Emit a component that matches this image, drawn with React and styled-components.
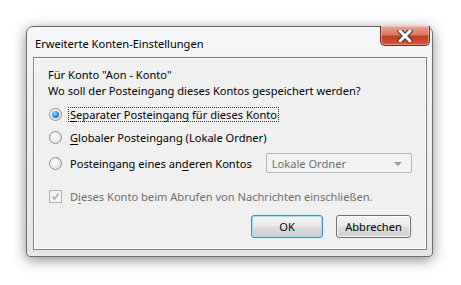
import styled, { createGlobalStyle } from "styled-components";

const GlobalStyle = createGlobalStyle`
  html, body {
    margin: 0;
    padding: 0;
    background: #ffffff;
  }
  body {
    font-family: "Noto Sans", "Open Sans", sans-serif;
    font-size: 11.1px;
    color: #000;
  }
`;

const Page = styled.div`
  width: 461px;
  height: 285px;
  padding: 26px 0 0 26px;
  box-sizing: border-box;
`;

const Window = styled.div`
  width: 407px;
  height: 231px;
  box-sizing: border-box;
  border: 1px solid #6b6b6b;
  border-radius: 7px 7px 4px 4px;
  background: linear-gradient(180deg, #f6f7f8 0%, #eef0f2 40%, #e4e6e8 100%);
  box-shadow: 0 3px 14px rgba(0, 0, 0, 0.45);
  display: flex;
  flex-direction: column;
  padding: 0 5px 6px 6px;
`;

const TitleBar = styled.div`
  height: 30px;
  display: flex;
  align-items: flex-start;
  justify-content: space-between;
`;

const Title = styled.div`
  padding: 9px 0 0 2px;
  color: #000;
`;

const CloseButton = styled.div`
  width: 50px;
  height: 20px;
  margin-top: -1px;
  margin-right: -3px;
  box-sizing: border-box;
  border: 1px solid #6d2a1e;
  border-top: none;
  border-radius: 0 0 5px 5px;
  background: linear-gradient(180deg, #e9a796 0%, #d9795f 45%, #c13d22 55%, #d2573c 100%);
  box-shadow: inset 0 0 0 1px rgba(255, 220, 210, 0.45);
  display: flex;
  align-items: center;
  justify-content: center;
`;

const Content = styled.div`
  flex: 1;
  border: 1px solid #7f8387;
  box-shadow: inset 0 0 0 1px #ffffff;
  background: #f0f0f0;
  padding: 9px 14px 0 14px;
  display: flex;
  flex-direction: column;
`;

const Line = styled.div`
  height: 16px;
  line-height: 16px;
  white-space: nowrap;
`;

const OptionRow = styled.div`
  display: flex;
  align-items: center;
  height: 16px;
  margin-top: ${(p) => p.$gap}px;
  white-space: nowrap;
  color: ${(p) => (p.$disabled ? "#6d6d6d" : "#000")};
`;

const RadioCircle = styled.span`
  width: 13px;
  height: 13px;
  box-sizing: border-box;
  border-radius: 50%;
  border: 1px solid #8f8f8f;
  background: radial-gradient(circle at 40% 40%, #ffffff 0%, #e4e4e4 70%, #d0d0d0 100%);
  margin: 0 6px 0 1px;
  display: flex;
  align-items: center;
  justify-content: center;
  flex-shrink: 0;
`;

const RadioDot = styled.span`
  width: 7px;
  height: 7px;
  border-radius: 50%;
  background: radial-gradient(circle at 40% 35%, #a9dcf8 0%, #2f8fd8 50%, #124c8a 100%);
`;

const Label = styled.span`
  padding: 0 1px;
  border: 1px dotted ${(p) => (p.$focused ? "#333" : "transparent")};
  line-height: 13px;
`;

const U = styled.span`
  text-decoration: underline;
  text-underline-offset: 2px;
`;

const Select = styled.div`
  margin-left: 12px;
  width: 150px;
  height: 20px;
  box-sizing: border-box;
  border: 1px solid #b5b5b5;
  border-radius: 2px;
  background: #f2f2f2;
  color: #6d6d6d;
  display: flex;
  align-items: center;
  justify-content: space-between;
  padding: 0 9px 0 5px;
`;

const Arrow = styled.span`
  width: 0;
  height: 0;
  border-left: 4px solid transparent;
  border-right: 4px solid transparent;
  border-top: 4px solid #9a9a9a;
  margin-top: 2px;
`;

const CheckBox = styled.span`
  width: 13px;
  height: 13px;
  box-sizing: border-box;
  border: 1px solid #b1b1b1;
  background: #f4f4f4;
  margin: 0 6px 0 1px;
  display: flex;
  align-items: center;
  justify-content: center;
  flex-shrink: 0;
`;

const ButtonRow = styled.div`
  display: flex;
  justify-content: flex-end;
  gap: 13px;
  margin-top: 11px;
  padding-right: 1px;
`;

const Button = styled.div`
  width: ${(p) => p.$w}px;
  height: 23px;
  box-sizing: border-box;
  border: 1px solid ${(p) => (p.$default ? "#3c8bc6" : "#707070")};
  border-radius: 3px;
  background: linear-gradient(180deg, #f3f3f3 0%, #ebebeb 48%, #dddddd 52%, #cfcfcf 100%);
  box-shadow: inset 0 0 0 1px ${(p) => (p.$default ? "#a8dcf5" : "#fbfbfb")};
  display: flex;
  align-items: center;
  justify-content: center;
`;

export default function App() {
  return (
    <Page>
      <GlobalStyle />
      <Window>
        <TitleBar>
          <Title>Erweiterte Konten-Einstellungen</Title>
          <CloseButton>
            <svg width="16" height="12" viewBox="0 0 16 12">
              <path d="M3 1 L13 11 M13 1 L3 11" stroke="#3a3a3a" strokeWidth="5" strokeLinecap="round" />
              <path d="M3 1 L13 11 M13 1 L3 11" stroke="#ffffff" strokeWidth="3" strokeLinecap="round" />
            </svg>
          </CloseButton>
        </TitleBar>
        <Content>
          <Line>Für Konto "Aon - Konto"</Line>
          <Line>Wo soll der Posteingang dieses Kontos gespeichert werden?</Line>
          <OptionRow $gap={7}>
            <RadioCircle><RadioDot /></RadioCircle>
            <Label $focused><U>S</U>eparater Posteingang für dieses Konto</Label>
          </OptionRow>
          <OptionRow $gap={7}>
            <RadioCircle />
            <Label><U>G</U>lobaler Posteingang (Lokale Ordner)</Label>
          </OptionRow>
          <OptionRow $gap={10}>
            <RadioCircle />
            <Label>Posteingang eines an<U>d</U>eren Kontos</Label>
            <Select>
              <span>Lokale Ordner</span>
              <Arrow />
            </Select>
          </OptionRow>
          <OptionRow $gap={17} $disabled>
            <CheckBox>
              <svg width="9" height="9" viewBox="0 0 9 9">
                <path d="M1.5 4.5 L3.5 7 L7.5 1.5" stroke="#a6a6a6" strokeWidth="1.4" fill="none" />
              </svg>
            </CheckBox>
            <Label>D<U>i</U>eses Konto beim Abrufen von Nachrichten einschließen.</Label>
          </OptionRow>
          <ButtonRow>
            <Button $w={72} $default>OK</Button>
            <Button $w={75}>Abbrechen</Button>
          </ButtonRow>
        </Content>
      </Window>
    </Page>
  );
}
